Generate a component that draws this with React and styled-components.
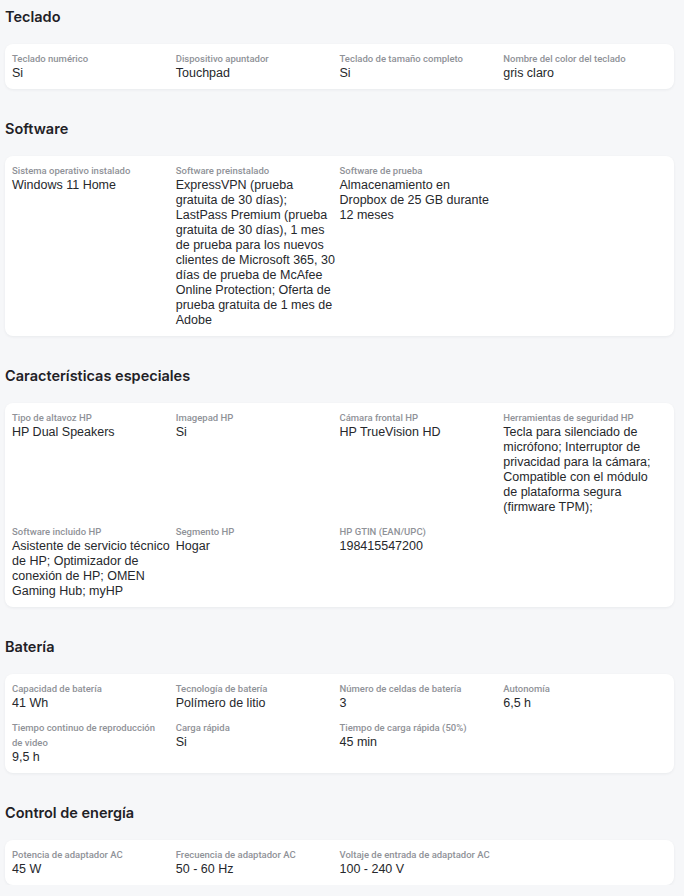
import React from "react";
import styled, { createGlobalStyle } from "styled-components";

const sections = [
  {
    title: "Teclado",
    rows: [
      [
        ["Teclado numérico", "Si"],
        ["Dispositivo apuntador", "Touchpad"],
        ["Teclado de tamaño completo", "Si"],
        ["Nombre del color del teclado", "gris claro"],
      ],
    ],
  },
  {
    title: "Software",
    rows: [
      [
        ["Sistema operativo instalado", "Windows 11 Home"],
        [
          "Software preinstalado",
          "ExpressVPN (prueba gratuita de 30 días); LastPass Premium (prueba gratuita de 30 días), 1 mes de prueba para los nuevos clientes de Microsoft 365, 30 días de prueba de McAfee Online Protection; Oferta de prueba gratuita de 1 mes de Adobe",
        ],
        ["Software de prueba", "Almacenamiento en Dropbox de 25 GB durante 12 meses"],
      ],
    ],
  },
  {
    title: "Características especiales",
    rows: [
      [
        ["Tipo de altavoz HP", "HP Dual Speakers"],
        ["Imagepad HP", "Si"],
        ["Cámara frontal HP", "HP TrueVision HD"],
        [
          "Herramientas de seguridad HP",
          "Tecla para silenciado de micrófono; Interruptor de privacidad para la cámara; Compatible con el módulo de plataforma segura (firmware TPM);",
        ],
      ],
      [
        [
          "Software incluido HP",
          "Asistente de servicio técnico de HP; Optimizador de conexión de HP; OMEN Gaming Hub; myHP",
        ],
        ["Segmento HP", "Hogar"],
        ["HP GTIN (EAN/UPC)", "198415547200"],
      ],
    ],
  },
  {
    title: "Batería",
    rows: [
      [
        ["Capacidad de batería", "41 Wh"],
        ["Tecnología de batería", "Polímero de litio"],
        ["Número de celdas de batería", "3"],
        ["Autonomía", "6,5 h"],
      ],
      [
        ["Tiempo continuo de reproducción de video", "9,5 h"],
        ["Carga rápida", "Si"],
        ["Tiempo de carga rápida (50%)", "45 min"],
      ],
    ],
  },
  {
    title: "Control de energía",
    rows: [
      [
        ["Potencia de adaptador AC", "45 W"],
        ["Frecuencia de adaptador AC", "50 - 60 Hz"],
        ["Voltaje de entrada de adaptador AC", "100 - 240 V"],
      ],
    ],
  },
];

const App = () => {
  return (
    <Page>
      <GlobalStyle />
      {sections.map((section) => (
        <Section key={section.title}>
          <Heading>{section.title}</Heading>
          <Card>
            {section.rows.map((row, i) => (
              <Row key={i}>
                {row.map(([label, value]) => (
                  <Spec key={label}>
                    <Label>{label}</Label>
                    <Value>{value}</Value>
                  </Spec>
                ))}
              </Row>
            ))}
          </Card>
        </Section>
      ))}
    </Page>
  );
};

export default App;

const GlobalStyle = createGlobalStyle`
  body {
    margin: 0;
    background: #f6f7f9;
  }
`;

const Page = styled.div`
  padding: 7px 10px 0 5px;
  display: flex;
  flex-direction: column;
  gap: 30px;
`;

const Section = styled.section`
  display: flex;
  flex-direction: column;
  gap: 17px;
`;

const Heading = styled.h2`
  margin: 0;
  font-family: Inter, "Liberation Sans", sans-serif;
  font-size: 14.5px;
  font-weight: 600;
  line-height: 20px;
  color: #1f2126;
`;

const Card = styled.div`
  background: #ffffff;
  border-radius: 8px;
  box-shadow: 0 1px 3px rgba(20, 30, 50, 0.06);
  padding: 7px 7px 8px 7px;
  display: flex;
  flex-direction: column;
  gap: 9px;
`;

const Row = styled.div`
  display: grid;
  grid-template-columns: repeat(4, 1fr);
`;

const Spec = styled.div`
  display: flex;
  flex-direction: column;
  padding-right: 3.5px;
`;

const Label = styled.div`
  font-family: Roboto, "Liberation Sans", sans-serif;
  font-size: 9.5px;
  font-weight: 500;
  line-height: 15px;
  color: #8f9298;
  padding-right: 6px;
`;

const Value = styled.div`
  font-family: "Liberation Sans", Arial, sans-serif;
  font-size: 12.5px;
  line-height: 15px;
  color: #26282c;
`;
